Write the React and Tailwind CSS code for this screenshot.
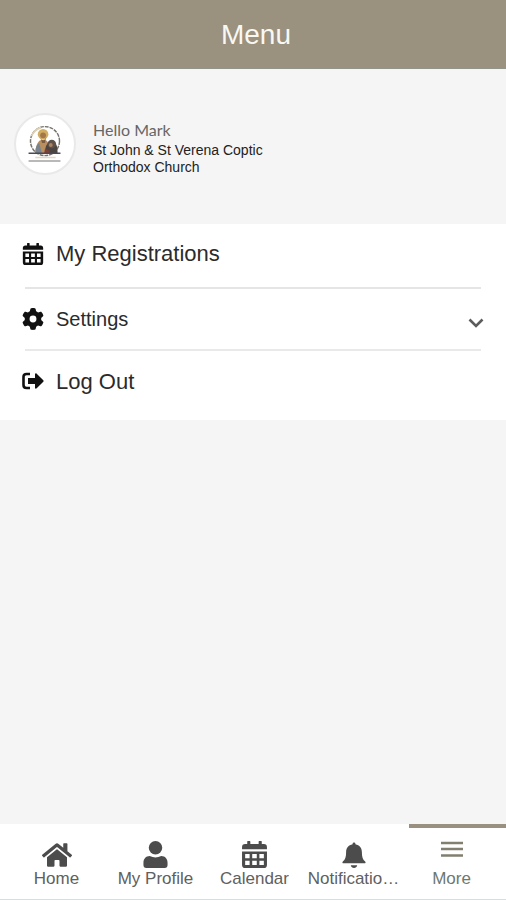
import React from 'react'
import { FaHome } from 'react-icons/fa'
import { FaGear } from 'react-icons/fa6'

function CalendarIcon({ size, className }) {
  return (
    <svg width={size} height={size} viewBox="0 0 24 26" fill="currentColor" className={className} aria-hidden="true">
      <path d="M5 1a1.500 1.500 0 0 1 3 0v2h8V1a1.500 1.500 0 0 1 3 0v2h2a3 3 0 0 1 3 3v2H0V6a3 3 0 0 1 3-3h2z" />
      <path
        fillRule="evenodd"
        d="M0 10h24v13a3 3 0 0 1-3 3H3a3 3 0 0 1-3-3zM3 12.500v4h4.300v-4zM9.800 12.500v4h4.400v-4zM16.700 12.500v4H21v-4zM3 19v4h4.300v-4zM9.800 19v4h4.400v-4zM16.700 19v4H21v-4z"
      />
    </svg>
  )
}

function LogOutIcon({ size, className }) {
  return (
    <svg width={size} height={size} viewBox="0 0 22 22" className={className} aria-hidden="true">
      <path d="M8 4H4.500C2.500 4 1.500 5 1.500 7v8c0 2 1 3 3 3H8" fill="none" stroke="currentColor" strokeWidth="2.600" />
      <path d="M6 8h7V4.300c0-1 1-1.300 1.700-.6l6.600 6.500c.5.500.5 1.100 0 1.600l-6.600 6.500c-.7.700-1.700.4-1.700-.6V14H6z" fill="currentColor" />
    </svg>
  )
}

function ProfileIcon({ size, className }) {
  return (
    <svg width={size} height={size} viewBox="0 0 26 28" fill="currentColor" className={className} aria-hidden="true">
      <circle cx="13" cy="7" r="7" />
      <path d="M7 15.500c2 1 4 1.500 6 1.500s4-.5 6-1.500c4 0 6.500 3 6.500 7V25c0 2-1 3-3 3h-19c-2 0-3-1-3-3v-2.500c0-4 2.500-7 6.500-7z" />
    </svg>
  )
}

function BellIcon({ size, className }) {
  return (
    <svg width={size} height={size} viewBox="0 0 26 28" fill="currentColor" className={className} aria-hidden="true">
      <path d="M11.500 2.500V2a1.500 1.500 0 0 1 3 0v.5C19 3.300 21.500 6.500 21.500 11c0 5 1 8 3.500 10 1 .9.500 2-.8 2H1.800C.5 23 0 21.900 1 21c2.500-2 3.500-5 3.500-10 0-4.500 2.500-7.700 7-8.500z" />
      <path d="M9.500 25h7c-.5 2-1.700 3-3.500 3s-3-1-3.500-3z" />
    </svg>
  )
}

const tabs = [
  { label: 'Home', icon: FaHome, size: 30 },
  { label: 'My Profile', icon: ProfileIcon, size: 27 },
  { label: 'Calendar', icon: CalendarIcon, size: 27 },
  { label: 'Notificatio…', icon: BellIcon, size: 26 },
]

function ChurchLogo() {
  return (
    <svg viewBox="0 0 60 60" className="w-full h-full" aria-hidden="true">
      <circle cx="30" cy="27" r="15" fill="none" stroke="#77736e" strokeWidth="1.500" strokeDasharray="4 1" />
      <path d="M16 22a15 15 0 0 1 10-9" fill="none" stroke="#ddd1b4" strokeWidth="2" />
      <path d="M20 40c0-7 2-12 5-14h6c3 2 4 7 4 14z" fill="#b98f60" />
      <path d="M20 40c0-6 1-9 4-11l3 11z" fill="#78848d" />
      <circle cx="28" cy="20" r="5.500" fill="#d0ad62" />
      <circle cx="28" cy="21" r="3" fill="#a57649" />
      <path d="M25 23c1 4 5 4 6 0l-1 6h-3z" fill="#7b5e41" />
      <path d="M30 40c0-8 2-12 7-12s6 4 6 12z" fill="#4b4542" />
      <circle cx="37" cy="30" r="4.500" fill="#5f5148" />
      <circle cx="36" cy="31" r="2" fill="#a78463" />
      <path d="M30 35l5 2-1 3h-5z" fill="#853f32" />
      <path d="M13 39.500h33" stroke="#4c4856" strokeWidth="1.500" />
      <path d="M20 44h21" stroke="#e5d7be" strokeWidth="1.500" />
      <path d="M13 47.500h33" stroke="#bbb9b7" strokeWidth="2" />
    </svg>
  )
}

function MenuItem({ icon: Icon, label, className, children, ...props }) {
  return (
    <button
      type="button"
      className={`flex w-full items-center gap-3 px-[22px] text-left text-[#2b2b2b] ${className}`}
      {...props}
    >
      <Icon size={22} className="shrink-0 text-[#111111]" />
      <span className="grow">{label}</span>
      {children}
    </button>
  )
}

export default function App() {
  return (
    <div className="flex min-h-screen flex-col bg-[#f5f5f5] font-['Liberation_Sans',Arial,sans-serif]">
      {/* Header */}
      <header className="border-b border-[#91958a] bg-[#9b917f] pt-[17px] pb-[15px] pl-1.5 text-center">
        <h1 className="text-[28px] leading-9 text-[#f8f8f3]">Menu</h1>
      </header>

      {/* Profile */}
      <section className="flex items-center gap-[17px] px-3.5 pt-[43px] pb-12">
        <div className="h-[62px] w-[62px] shrink-0 overflow-hidden rounded-full border-2 border-[#e9e9e9] bg-white">
          <ChurchLogo />
        </div>
        <div className="max-w-[190px] pt-2">
          <p className="font-[Lato,sans-serif] text-base leading-5 text-[#666666]">Hello Mark</p>
          <p className="pt-0.5 text-sm leading-[17px] text-[#222222]">St John &amp; St Verena Coptic Orthodox Church</p>
        </div>
      </section>

      {/* Menu list */}
      <main className="bg-white pb-[9px]">
        <MenuItem icon={CalendarIcon} label="My Registrations" className="h-[63px] pb-1 text-[22px]" />
        <hr className="mx-[25px] border-t-2 border-[#e5e5e5]" />
        <MenuItem icon={FaGear} label="Settings" className="h-[60px] text-xl" aria-expanded="false">
          <svg width="16" height="12" viewBox="0 0 16 12" fill="none" className="mt-2" aria-hidden="true">
            <path d="M1.500 2.500L8 9l6.500-6.500" stroke="#5c5c5c" strokeWidth="2.600" />
          </svg>
        </MenuItem>
        <hr className="mx-[25px] border-t-2 border-[#e9e9e9]" />
        <MenuItem icon={LogOutIcon} label="Log Out" className="h-[60px] text-[22px]" />
      </main>

      {/* Bottom tabs */}
      <nav className="mt-auto grid grid-cols-5 border-b border-[#d0e2df] bg-white pr-1 pl-[7px] text-[17px] leading-5 text-[#606060]">
        {tabs.map(({ label, icon: Icon, size }) => (
          <button key={label} type="button" className="flex h-[75px] flex-col items-center pt-4 whitespace-nowrap">
            <span className="flex h-[29px] items-center">
              <Icon size={size} className="text-[#4c4c4c]" />
            </span>
            <span>{label}</span>
          </button>
        ))}
        <button
          type="button"
          aria-current="page"
          className="-mr-1 ml-1.5 flex h-[75px] flex-col items-center border-t-4 border-[#99907f] pt-3 pr-3 text-[#6c7872]"
        >
          <span className="flex h-[29px] items-start">
            <svg width="24" height="18" viewBox="0 0 24 18" stroke="#827f70" strokeWidth="2.500" aria-hidden="true">
              <path d="M1 3h22M1 9h22M1 15.500h22" />
            </svg>
          </span>
          <span>More</span>
        </button>
      </nav>
    </div>
  )
}
